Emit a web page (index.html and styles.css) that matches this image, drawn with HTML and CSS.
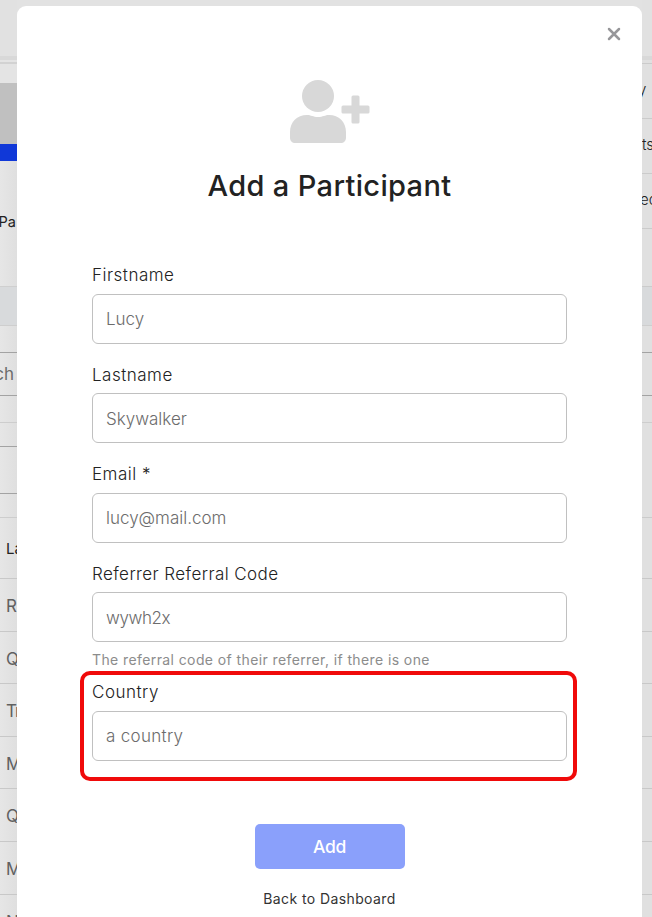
FILE: index.html
```html
<!DOCTYPE html>
<html lang="en">
<head>
    <meta charset="UTF-8">
    <meta name="viewport" content="width=device-width, initial-scale=1.0">
    <title>Add a Participant</title>
    <link rel="stylesheet" href="styles.css">
</head>
<body>

<div class="dashboard">
    <div class="side side-left">
        <div class="topbar"></div>
        <div class="dashed"></div>
        <div class="banner"></div>
        <div class="banner-blue"></div>
        <div class="summary">Pa</div>
        <div class="tabs"></div>
        <div class="gap"></div>
        <div class="search">ch</div>
        <div class="space-a"></div>
        <div class="space-b"></div>
        <div class="filter"></div>
        <div class="space-c"></div>
        <div class="row head">La</div>
        <div class="row">R</div>
        <div class="row">Q</div>
        <div class="row row-tr">Tr</div>
        <div class="row">M</div>
        <div class="row">Q</div>
        <div class="row">M</div>
        <div class="row">N</div>
    </div>
    <div class="side side-right">
        <div class="topbar"></div>
        <div class="line"></div>
        <div class="item item-y">y</div>
        <div class="item">ts</div>
        <div class="item item-ed">ed</div>
        <div class="space-top"></div>
        <div class="tabs"></div>
        <div class="gap"></div>
        <div class="search"></div>
        <div class="space-a"></div>
        <div class="space-tall"></div>
        <div class="row head"></div>
        <div class="row"></div>
        <div class="row"></div>
        <div class="row"></div>
        <div class="row"></div>
        <div class="row"></div>
        <div class="row"></div>
        <div class="row"></div>
    </div>
</div>

<div class="modal">
    <button class="close" type="button" aria-label="Close">
        <svg width="14" height="14" viewBox="0 0 14 14">
            <path d="M2 2L12 12M12 2L2 12" fill="none" stroke="#97979a" stroke-width="2.5" stroke-linecap="round"/>
        </svg>
    </button>

    <svg class="user-icon" width="80" height="64" viewBox="0 0 80 64" fill="#d8d8d8">
        <circle cx="28" cy="16" r="16"/>
        <path d="M0 52C0 42 7 35 17 35C21 35 23 37 28 37C33 37 35 35 39 35C49 35 56 42 56 52V57.500C56 61 54 63 50.500 63H5.500C2 63 0 61 0 57.500Z"/>
        <path d="M63 15.500H68Q69.500 15.500 69.500 17V25.500H78Q79.500 25.500 79.500 27V32Q79.500 33.500 78 33.500H69.500V42Q69.500 43.500 68 43.500H63Q61.500 43.500 61.500 42V33.500H53Q51.500 33.500 51.500 32V27Q51.500 25.500 53 25.500H61.500V17Q61.500 15.500 63 15.500Z"/>
    </svg>

    <h1>Add a Participant</h1>

    <form class="form">
        <div class="field">
            <label for="firstname">Firstname</label>
            <input type="text" id="firstname" placeholder="Lucy">
        </div>
        <div class="field field-lastname">
            <label for="lastname">Lastname</label>
            <input type="text" id="lastname" placeholder="Skywalker">
        </div>
        <div class="field">
            <label for="email">Email *</label>
            <input type="text" id="email" placeholder="lucy@mail.com">
        </div>
        <div class="field field-code">
            <label for="code">Referrer Referral Code</label>
            <input type="text" id="code" placeholder="wywh2x">
            <div class="help">The referral code of their referrer, if there is one</div>
        </div>
        <div class="field field-country">
            <label for="country">Country</label>
            <input type="text" id="country" placeholder="a country">
            <div class="highlight"></div>
        </div>
        <button class="add" type="button">Add</button>
        <a class="back">Back to Dashboard</a>
    </form>
</div>

</body>
</html>
```

FILE: styles.css
```css
* {
    box-sizing: border-box;
}
body {
    margin: 0;
    height: 917px;
    overflow: hidden;
    position: relative;
    font-family: Inter, "Liberation Sans", sans-serif;
    background-color: #e2e2e2;
    color: #222;
}

/* Page behind the modal */
.dashboard {
    display: flex;
    justify-content: space-between;
    height: 917px;
    overflow: hidden;
}
.side {
    overflow: hidden;
    white-space: nowrap;
}
.side-left {
    width: 17px;
    background: linear-gradient(to right, #e6e6e6, #dfdfdf);
}
.side-right {
    width: 10px;
    background-color: #e0e0e0;
}
.topbar {
    height: 60px;
    border-bottom: 4px solid #d8d8d8;
    background-color: #e1e1e1;
}
.dashed {
    height: 23px;
    background: linear-gradient(#e4e4e4 2px, #d2d2d2 2px, #d2d2d2 4px, #e4e4e4 4px);
}
.banner {
    height: 61px;
    background-color: #c0c0c0;
}
.banner-blue {
    height: 17px;
    background-color: #1038d8;
}
.summary {
    height: 126px;
    padding-top: 51px;
    font-size: 14.500px;
    line-height: 20px;
    text-indent: -1.500px;
    border-bottom: 1px solid #cfcfcf;
}
.tabs {
    height: 39px;
    background-color: #d8dadc;
    border-bottom: 1px solid #cecece;
}
.gap {
    height: 27px;
    border-bottom: 1px solid #a3a3a3;
}
.search {
    height: 43px;
    border-bottom: 1px solid #a3a3a3;
    font-size: 17px;
    line-height: 42px;
    color: #6c6c6c;
    direction: rtl;
    padding-right: 3px;
}
.space-a {
    height: 27px;
    border-bottom: 1px solid #cdcdcd;
}
.space-b {
    height: 24px;
    border-bottom: 1px solid #a3a3a3;
}
.filter {
    height: 47px;
    border-bottom: 1px solid #a3a3a3;
}
.space-c {
    height: 24px;
    border-bottom: 1px solid #cdcdcd;
}
.row {
    height: 52.6px;
    padding-left: 6px;
    font-size: 17px;
    line-height: 54px;
    color: #606060;
    border-bottom: 1px solid #c8c8c8;
}
.row.head {
    height: 61px;
    font-size: 15px;
    line-height: 62px;
    color: #222;
}
.row-tr {
    letter-spacing: -1px;
}
.line {
    height: 4px;
    border-bottom: 1px solid #cbcbcb;
}
.item {
    height: 55px;
    font-size: 15px;
    font-weight: 300;
    line-height: 52px;
    border-bottom: 1px solid #cbcbcb;
}
.item-y {
    text-indent: -4px;
}
.item-ed {
    text-indent: -2px;
}
.space-top {
    height: 58px;
    border-bottom: 1px solid #cbcbcb;
}
.space-tall {
    height: 95px;
    border-bottom: 1px solid #cbcbcb;
}

/* Modal */
.modal {
    position: absolute;
    top: 6px;
    left: 17px;
    width: 625px;
    height: 930px;
    padding: 74px 75px 0;
    background-color: #fff;
    border-radius: 9px;
}
.close {
    position: absolute;
    top: 21px;
    right: 21px;
    width: 14px;
    height: 14px;
    padding: 0;
    border: none;
    background: none;
    cursor: pointer;
}
.close svg,
.user-icon {
    display: block;
}
.user-icon {
    margin: 0 auto;
}
h1 {
    margin: 22px 0 0;
    font-size: 29px;
    line-height: 40px;
    font-weight: 500;
    letter-spacing: 0.35px;
    text-align: center;
}
.form {
    margin-top: 58px;
    display: flex;
    flex-direction: column;
    align-items: stretch;
}
.field {
    position: relative;
    height: 99.500px;
}
label {
    display: block;
    height: 29.9px;
    font-size: 17px;
    line-height: 22px;
    font-weight: 300;
    letter-spacing: 0.5px;
}
.field input {
    display: block;
    width: 475px;
    height: 50px;
    padding: 0 13px;
    border: 1px solid #c0c0c0;
    border-radius: 6px;
    background-color: #fff;
    font-family: inherit;
    font-size: 17px;
    font-weight: 300;
}
.field input::placeholder {
    color: #6c6c6c;
    opacity: 1;
}
.field-lastname input,
.field-code input {
    padding-top: 1px;
}
.field-code {
    height: 118.500px;
}
.field-code label {
    letter-spacing: 0.42px;
}
.field-code input {
    letter-spacing: -0.4px;
}
.field-country input {
    letter-spacing: 0.3px;
}
.help {
    margin-top: 8.6px;
    font-size: 14px;
    line-height: 18px;
    letter-spacing: 0.4px;
    color: #8c8c8c;
}
/* Red frame drawn over the country field */
.highlight {
    position: absolute;
    top: -10px;
    left: -12px;
    width: 497px;
    height: 110px;
    border: 4px solid #f00a0a;
    border-radius: 10px;
    pointer-events: none;
}
.add {
    align-self: center;
    width: 150px;
    height: 45px;
    margin-top: 43.500px;
    border: none;
    border-radius: 5px;
    background-color: #8aa0fb;
    color: #fff;
    font-family: inherit;
    font-size: 17.500px;
    font-weight: 500;
    letter-spacing: -0.3px;
    cursor: pointer;
}
.back {
    align-self: center;
    margin-top: 19.500px;
    font-size: 14px;
    line-height: 20px;
    letter-spacing: 0.4px;
    color: #333;
    cursor: pointer;
}
```
